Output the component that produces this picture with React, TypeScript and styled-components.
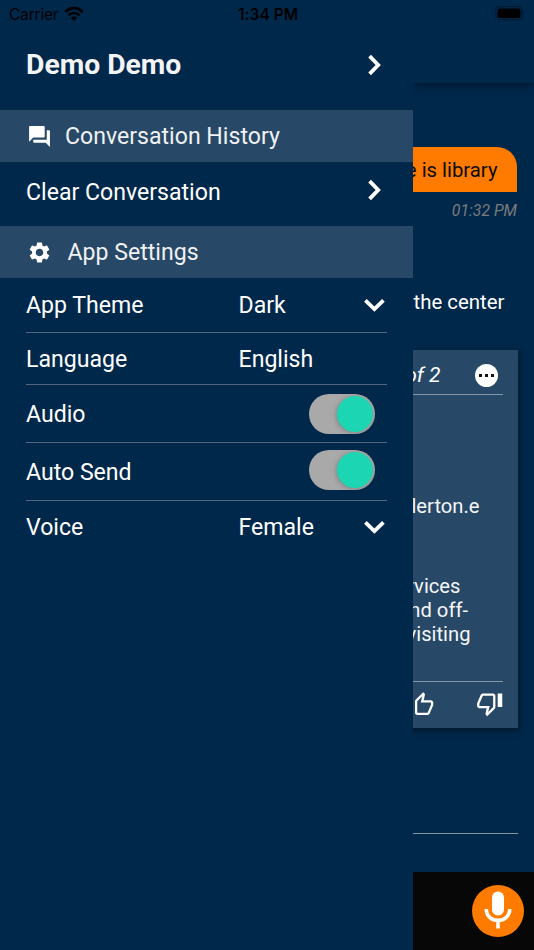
import React from "react";
import styled, { createGlobalStyle } from "styled-components";

const navy = "#00284b";
const slate = "#274866";
const orange = "#ff7b00";

const GlobalStyle = createGlobalStyle`
  * { box-sizing: border-box; }
  body { margin: 0; background: ${navy}; }
`;

const Screen = styled.div`
  position: relative;
  display: flex;
  width: 534px;
  height: 950px;
  overflow: hidden;
  background: ${navy};
  font-family: Roboto, sans-serif;
  color: #fff;
  white-space: nowrap;
`;

const StatusBar = styled.header`
  position: absolute;
  inset: 0 0 auto 0;
  height: 28px;
  padding: 0 7px 0 9px;
  display: grid;
  grid-template-columns: 1fr auto 1fr;
  align-items: center;
  font-family: Inter, sans-serif;
  font-size: 15.5px;
  color: #000;
  z-index: 3;
`;

const Carrier = styled.div`
  display: flex;
  align-items: center;
  gap: 6px;
  letter-spacing: -0.2px;
`;

const Clock = styled.div`
  font-weight: 600;
  font-size: 15.5px;
  letter-spacing: 0.05px;
`;

const Battery = styled.svg`
  justify-self: end;
  display: block;
  margin: 0 1px 2px 0;
`;

const Drawer = styled.aside`
  flex: none;
  width: 412.5px;
  padding-top: 20px;
  background: ${navy};
`;

const NavRow = styled.div<{ $height: number }>`
  display: flex;
  align-items: center;
  justify-content: space-between;
  height: ${(p) => p.$height}px;
  padding: 0 31px 0 26px;
`;

const UserName = styled.h1`
  margin: 0;
  font-size: 28.3px;
  line-height: 34px;
  font-weight: 700;
  color: #f4f4f6;
`;

const Label = styled.span<{ $lift?: number }>`
  font-size: 23.1px;
  line-height: 30px;
  padding-top: 2px;
  padding-bottom: ${(p) => p.$lift ?? 0}px;
`;

const Band = styled.div<{ $gap: number }>`
  display: flex;
  align-items: center;
  gap: ${(p) => p.$gap}px;
  height: 52px;
  padding-left: 27px;
  background: ${slate};
  color: #f0f1f3;
`;

const Settings = styled.div`
  padding: 0 26px;
`;

const SettingRow = styled.div<{ $height: number; $last?: boolean }>`
  display: grid;
  grid-template-columns: 212.5px 1fr auto;
  align-items: center;
  height: ${(p) => p.$height}px;
  border-bottom: ${(p) => (p.$last ? "none" : "1px solid #52677d")};
`;

const Chevron = styled.svg`
  display: block;
  fill: none;
  stroke: #fff;
  stroke-width: 3.8;
`;

const Toggle = styled.div<{ $lift: number }>`
  display: flex;
  justify-content: flex-end;
  width: 66px;
  height: 40px;
  padding: 2px;
  margin: 0 11.5px ${(p) => p.$lift}px 0;
  border-radius: 20px;
  background: #a9a9a9;
`;

const Knob = styled.div`
  width: 36px;
  height: 36px;
  border-radius: 50%;
  background: #1cd5b2;
  box-shadow: -1px 1px 5px rgba(0, 0, 0, 0.22);
`;

const Chat = styled.main`
  flex: 1;
  min-width: 0;
  display: flex;
  flex-direction: column;
  align-items: flex-end;
  overflow: hidden;
`;

const TopBar = styled.div`
  width: 100%;
  flex: none;
  height: 82.5px;
  box-shadow: 0 2px 8px rgba(0, 0, 0, 0.5);
`;

const Bubble = styled.div`
  flex: none;
  width: 300px;
  height: 45px;
  margin: 64.5px 17px 0 0;
  padding-right: 19.5px;
  border-radius: 20px 20px 0 0;
  background: ${orange};
  color: #0a0a0a;
  font-size: 20.3px;
  line-height: 46px;
  text-align: right;
`;

const Time = styled.time`
  margin: 8px 17px 0 0;
  font-size: 15.8px;
  line-height: 21px;
  font-style: italic;
  color: #7b7b7c;
`;

const Reply = styled.p`
  margin: 69px 29.5px 0 0;
  font-size: 20.4px;
  line-height: 24px;
`;

const Card = styled.section`
  flex: none;
  width: 480px;
  height: 378px;
  margin: 36px 16px 0 0;
  padding: 0 15.5px;
  background: ${slate};
  box-shadow: 1px 2px 7px rgba(0, 0, 0, 0.5);
  display: flex;
  flex-direction: column;
`;

const CardHead = styled.div`
  display: flex;
  align-items: center;
  justify-content: flex-end;
  height: 45px;
  padding: 6px 4.5px 0 0;
  gap: 34.5px;
  border-bottom: 1px solid #8495a6;
  font-size: 21px;
  font-style: italic;
`;

const CardBody = styled.div`
  flex: 1;
  padding-top: 99px;
  color: #f4f6f8;
`;

const Line = styled.div<{ $inset: number; $above?: number }>`
  margin-top: ${(p) => p.$above ?? 0}px;
  padding-right: ${(p) => p.$inset}px;
  font-size: 20.2px;
  line-height: 24px;
  text-align: right;
`;

const CardActions = styled.div`
  display: flex;
  justify-content: flex-end;
  gap: 43px;
  height: 47px;
  padding-top: 7.5px;
  border-top: 1px solid #8495a6;
`;

const Divider = styled.div`
  flex: none;
  width: 480px;
  height: 1px;
  margin: 105px 16px 38px 0;
  background: #8495a6;
`;

const InputBar = styled.footer`
  flex: 1;
  width: 100%;
  display: flex;
  justify-content: flex-end;
  padding: 13px 10.5px 0 0;
  background: #070707;
`;

const MicButton = styled.div`
  flex: none;
  display: grid;
  place-items: center;
  width: 52px;
  height: 52px;
  padding-bottom: 2px;
  border-radius: 50%;
  background: ${orange};
`;

const ThumbIcon = styled.svg<{ $drop?: number }>`
  flex: none;
  width: 27.4px;
  height: 27.4px;
  margin-top: ${(p) => p.$drop ?? 0}px;
  margin-right: -1px;
  fill: #fff;
`;

const Right = ({ lift = 0 }: { lift?: number }) => (
  <Chevron width="14" height={22 + lift} viewBox={`0 0 14 ${22 + lift}`}>
    <path d="M1.6 2.2 L10.2 11 L1.6 19.8" />
  </Chevron>
);

const Down = () => (
  <Chevron width="23" height="16" viewBox="0 0 23 16">
    <path d="M1.4 3.4 L10.4 12.2 L19.4 3.4" />
  </Chevron>
);

export default function App() {
  return (
    <Screen>
      <GlobalStyle />
      <StatusBar>
        <Carrier>
          Carrier
          <svg width="20" height="17" viewBox="0 0 20 17">
            <g fill="none" stroke="#000" strokeWidth="2.7">
              <path d="M1.4 6 C6.2 0.7 13.8 0.7 18.6 6" />
              <path d="M4.5 9.4 C7.5 6.2 12.5 6.2 15.5 9.4" />
            </g>
            <path d="M6.9 11.9 C8.7 10.1 11.3 10.1 13.1 11.9 L10 15Z" />
          </svg>
        </Carrier>
        <Clock>1:34 PM</Clock>
        <Battery width="31" height="15" viewBox="0 0 31 15">
          <rect x="0.7" y="0.7" width="26.6" height="13" rx="4" fill="none" stroke="#001a33" strokeWidth="1.2" />
          <rect x="2.5" y="2.5" width="23" height="9.5" rx="2.2" />
          <path d="M28.7 5 Q30.5 7.2 28.7 9.5Z" fill="#001a33" />
        </Battery>
      </StatusBar>

      <Drawer>
        <NavRow $height={90}>
          <UserName>Demo Demo</UserName>
          <Right />
        </NavRow>
        <Band $gap={13}>
          <svg width="25" height="25" viewBox="0 0 24 24" fill="#fff">
            <path d="M21 6h-2v9H6v2c0 .55.45 1 1 1h11l4 4V7c0-.55-.45-1-1-1zm-4 6V3c0-.55-.45-1-1-1H3c-.55 0-1 .45-1 1v14l4-4h10c.55 0 1-.45 1-1z" />
          </svg>
          <Label>Conversation History</Label>
        </Band>
        <NavRow $height={64}>
          <Label $lift={4}>Clear Conversation</Label>
          <Right lift={8} />
        </NavRow>
        <Band $gap={15.5}>
          <svg width="25" height="25" viewBox="0 0 24 24" fill="#fff">
            <path d="M19.14 12.94c.04-.3.06-.61.06-.94 0-.32-.02-.64-.07-.94l2.03-1.58c.18-.14.23-.41.12-.61l-1.92-3.32c-.12-.22-.37-.29-.59-.22l-2.39.96c-.5-.38-1.03-.7-1.62-.94l-.36-2.54c-.04-.24-.24-.41-.48-.41h-3.84c-.24 0-.43.17-.47.41l-.36 2.54c-.59.24-1.13.57-1.62.94l-2.39-.96c-.22-.08-.47 0-.59.22L2.74 8.87c-.12.21-.08.47.12.61l2.03 1.58c-.05.3-.09.63-.09.94s.02.64.07.94l-2.03 1.58c-.18.14-.23.41-.12.61l1.92 3.32c.12.22.37.29.59.22l2.39-.96c.5.38 1.03.7 1.62.94l.36 2.54c.05.24.24.41.48.41h3.84c.24 0 .44-.17.47-.41l.36-2.54c.59-.24 1.13-.56 1.62-.94l2.39.96c.22.08.47 0 .59-.22l1.92-3.32c.12-.22.07-.47-.12-.61l-2.01-1.58zM12 15.6c-1.98 0-3.6-1.62-3.6-3.6s1.62-3.6 3.6-3.6 3.6 1.62 3.6 3.6-1.62 3.6-3.6 3.6z" />
          </svg>
          <Label>App Settings</Label>
        </Band>
        <Settings>
          <SettingRow $height={55}>
            <Label>App Theme</Label>
            <Label>Dark</Label>
            <Down />
          </SettingRow>
          <SettingRow $height={52}>
            <Label>Language</Label>
            <Label>English</Label>
          </SettingRow>
          <SettingRow $height={58}>
            <Label>Audio</Label>
            <span />
            <Toggle $lift={0}>
              <Knob />
            </Toggle>
          </SettingRow>
          <SettingRow $height={58}>
            <Label>Auto Send</Label>
            <span />
            <Toggle $lift={3}>
              <Knob />
            </Toggle>
          </SettingRow>
          <SettingRow $height={52} $last>
            <Label>Voice</Label>
            <Label>Female</Label>
            <Down />
          </SettingRow>
        </Settings>
      </Drawer>

      <Chat>
        <TopBar />
        <Bubble>Where is library</Bubble>
        <Time>01:32 PM</Time>
        <Reply>the center</Reply>
        <Card>
          <CardHead>
            1 of 2
            <svg width="23" height="23" viewBox="0 0 23 23">
              <circle cx="11.5" cy="11.5" r="11.5" fill="#fff" />
              <path d="M4 10h3v3H4zM10 10h3v3h-3zM16 10h3v3h-3z" fill="#111" />
            </svg>
          </CardHead>
          <CardBody>
            <Line $inset={23}>fullerton.e</Line>
            <Line $inset={42} $above={56}>services</Line>
            <Line $inset={34.5}>and off-</Line>
            <Line $inset={32}>visiting</Line>
          </CardBody>
          <CardActions>
            <ThumbIcon viewBox="0 0 24 24" $drop={1}>
              <path d="M9 21h9c.83 0 1.54-.5 1.84-1.22l3.02-7.05c.09-.23.14-.47.14-.73v-2c0-1.1-.9-2-2-2h-6.31l.95-4.57.03-.32c0-.41-.17-.79-.44-1.06L14.17 1 7.58 7.59C7.22 7.95 7 8.45 7 9v10c0 1.1.9 2 2 2zM9 9l4.34-4.34L12 10h9v2l-3 7H9V9zM1 9h4v12H1z" />
            </ThumbIcon>
            <ThumbIcon viewBox="0 0 24 24">
              <path d="M15 3H6c-.83 0-1.54.5-1.84 1.22l-3.02 7.05c-.09.23-.14.47-.14.73v2c0 1.1.9 2 2 2h6.31l-.95 4.57-.03.32c0 .41.17.79.44 1.06L9.83 23l6.59-6.59c.36-.36.58-.86.58-1.41V5c0-1.1-.9-2-2-2zm0 12l-4.34 4.34L12 14H3v-2l3-7h9v10zm4-12h4v12h-4z" />
            </ThumbIcon>
          </CardActions>
        </Card>
        <Divider />
        <InputBar>
          <MicButton>
            <svg width="28" height="38" viewBox="0 0 28 38">
              <rect x="8" y="0.5" width="12" height="24" rx="6" fill="#fff" />
              <path d="M2.3 18 C2.3 33.2 25.7 33.2 25.7 18 M14 29 V37.5" fill="none" stroke="#fff" strokeWidth="3.6" />
            </svg>
          </MicButton>
        </InputBar>
      </Chat>
    </Screen>
  );
}
